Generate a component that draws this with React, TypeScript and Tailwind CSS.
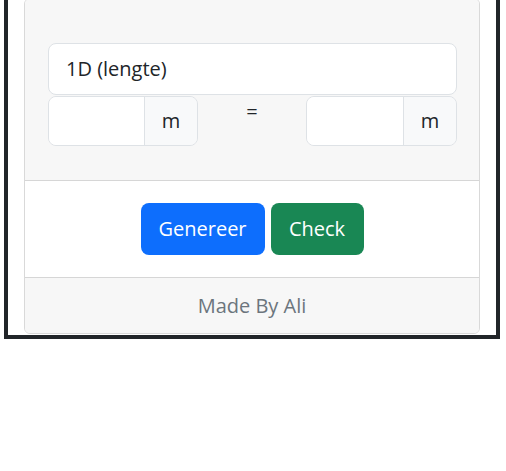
import React from "react";

export default function App() {
  return (
    <div className="w-[506px] h-[471px] bg-white overflow-hidden" style={{ fontFamily: '"Open Sans", "Noto Sans", sans-serif' }}>
      <div className="ml-[4px] w-[496px] border-x-[4px] border-b-[4px] border-[#212529] px-[16px] pb-[1px] mt-[-2px]">
        <div className="border border-[#d9d9d9] rounded-[6px] overflow-hidden">
          <div className="bg-[#f7f7f7] pt-[44px] pb-[34px] pl-[23px] pr-[22px] border-b border-[#d6d6d6]">
            <div className="h-[52px] bg-white border border-[#dee2e6] rounded-[8px] flex items-center px-[17px] text-[20px] text-[#212529]">
              1D (lengte)
            </div>
            <div className="grid grid-cols-[150px_1fr_151px] mt-[1px]">
              <div className="flex h-[50px] border border-[#dee2e6] rounded-[8px] overflow-hidden">
                <div className="flex-1 bg-white"></div>
                <div className="w-[53px] bg-[#f8f9fa] border-l border-[#dee2e6] flex items-center justify-center text-[20px] text-[#212529]">m</div>
              </div>
              <div className="text-center text-[20px] leading-[30px] text-[#212529] pt-[1px]">=</div>
              <div className="flex h-[50px] border border-[#dee2e6] rounded-[8px] overflow-hidden">
                <div className="flex-1 bg-white"></div>
                <div className="w-[53px] bg-[#f8f9fa] border-l border-[#dee2e6] flex items-center justify-center text-[20px] text-[#212529]">m</div>
              </div>
            </div>
          </div>
          <div className="bg-white flex justify-center gap-[6px] py-[22px] border-b border-[#d6d6d6]">
            <button className="h-[52px] w-[124px] rounded-[8px] bg-[#0d6efd] text-white text-[20px]">Genereer</button>
            <button className="h-[52px] w-[93px] rounded-[8px] bg-[#198754] text-white text-[20px]">Check</button>
          </div>
          <div className="bg-[#f7f7f7] h-[55px] flex items-center justify-center text-[20px] text-[#6c757d]">
            Made By Ali
          </div>
        </div>
      </div>
    </div>
  );
}
